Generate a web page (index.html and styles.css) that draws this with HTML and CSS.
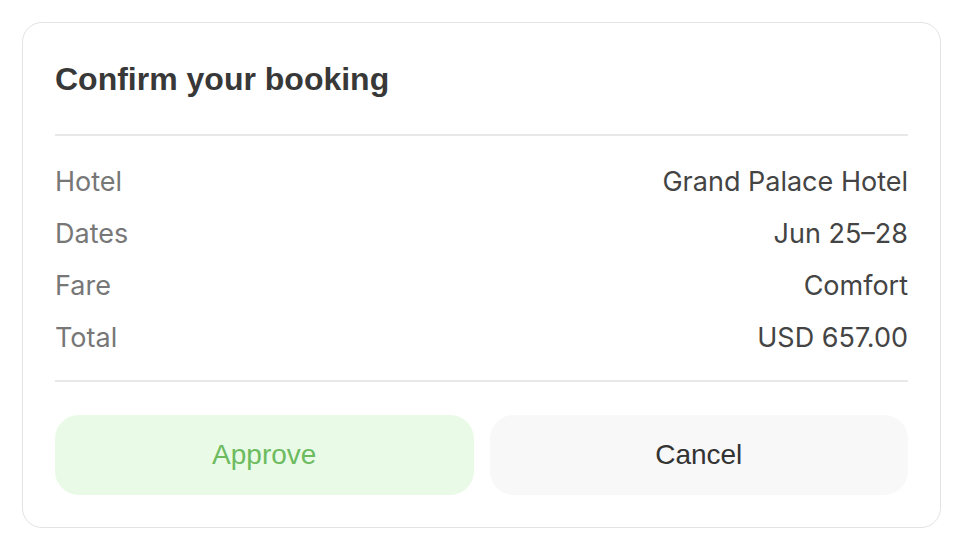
FILE: index.html
```html
<!DOCTYPE html>
<html>
<head>
<meta charset="utf-8">
<link rel="stylesheet" href="styles.css">
</head>
<body>
<div class="card">
  <h1 class="title">Confirm your booking</h1>
  <div class="divider"></div>
  <div class="rows">
    <div class="row"><span class="label">Hotel</span><span class="value">Grand Palace Hotel</span></div>
    <div class="row"><span class="label">Dates</span><span class="value">Jun 25–28</span></div>
    <div class="row"><span class="label">Fare</span><span class="value">Comfort</span></div>
    <div class="row"><span class="label">Total</span><span class="value">USD 657.00</span></div>
  </div>
  <div class="divider"></div>
  <div class="actions">
    <button class="btn approve">Approve</button>
    <button class="btn cancel">Cancel</button>
  </div>
</div>
</body>
</html>
```
FILE: styles.css
```css
html, body {
  margin: 0;
  padding: 0;
  background: #ffffff;
}
body {
  padding: 22px 26px 25px 22px;
  font-family: Inter, "Liberation Sans", sans-serif;
}
.card {
  border: 1px solid #e3e3e3;
  border-radius: 20px;
  padding: 32px 32px 32px 32px;
  background: #fff;
}
.title {
  margin: 0;
  font-family: "Liberation Sans", Arial, sans-serif;
  font-size: 32px;
  line-height: 48px;
  font-weight: 700;
  color: #383838;
}
.divider {
  height: 2px;
  background: #e8e8e8;
}
.title + .divider {
  margin-top: 31px;
}
.rows {
  padding: 20px 0 16px;
}
.row {
  display: flex;
  justify-content: space-between;
  font-size: 27px;
  line-height: 52px;
}
.label {
  color: #777777;
}
.value {
  color: #444444;
}
.actions {
  display: flex;
  gap: 16px;
  margin-top: 33px;
}
.btn {
  flex: 1;
  height: 80px;
  border: none;
  border-radius: 24px;
  font-family: "Liberation Sans", Arial, sans-serif;
  font-size: 28px;
}
.approve {
  background: #e9fae6;
  color: #6dbb5f;
}
.cancel {
  background: #f8f8f8;
  color: #333333;
}
```
